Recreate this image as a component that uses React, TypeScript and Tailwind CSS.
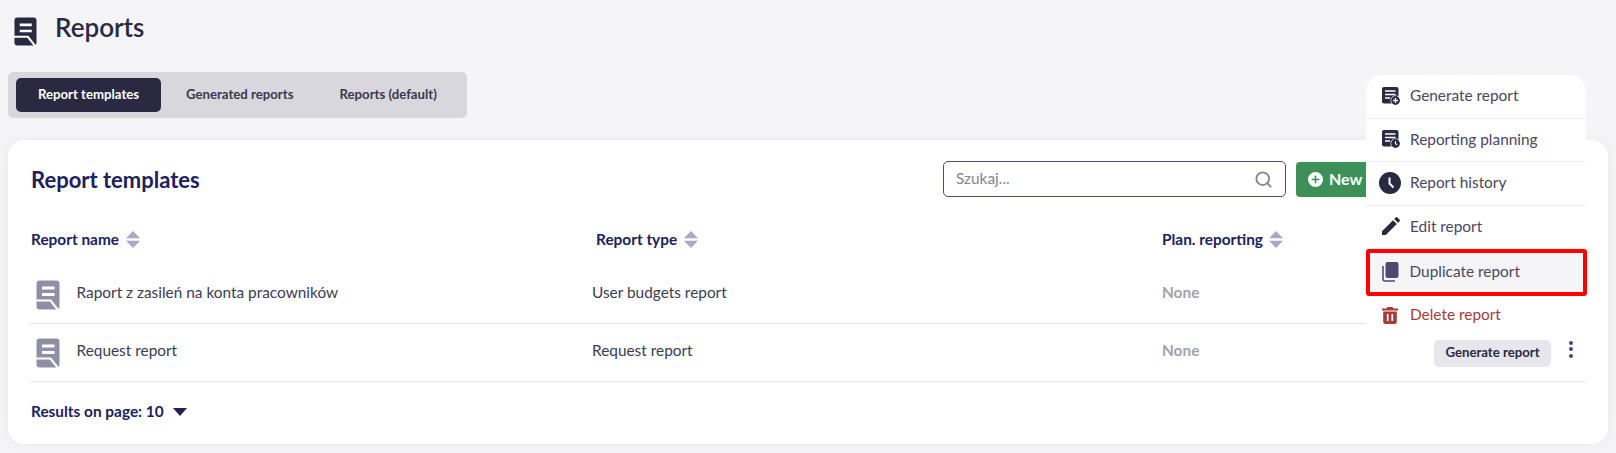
import React from 'react';
import { Search, Plus } from 'lucide-react';

const ReportIcon = ({ className }: { className: string }) => (
  <svg viewBox="0 0 24 30" className={className}>
    <rect x="0.5" y="0.5" width="23" height="29" rx="3" fill="currentColor" />
    <path d="M6 8h12.5M6 14.5h12.5" stroke="#fff" strokeWidth="2.8" fill="none" />
    <path d="M0 20.5h14.5l7.5 9.5" stroke="#fff" strokeWidth="2.2" fill="none" />
  </svg>
);

const SortIcon = () => (
  <svg viewBox="0 0 14 17" className="ml-[6.5px] h-[17px] w-[14px] text-[#a9a8c6]">
    <path d="M7 0l7 7.3H0zM0 9.7h14L7 17z" fill="currentColor" />
  </svg>
);

const DocIcon = ({ badge }: { badge: 'plus' | 'clock' }) => (
  <svg viewBox="0 0 18 18" className="h-[18px] w-[18px] text-[#2b2942]">
    <rect x="0" y="0" width="16.5" height="16.5" rx="2" fill="currentColor" />
    <path d="M3 4h10.5M3 7.5h10.5M3 11h5" stroke="#fff" strokeWidth="1.6" />
    <circle cx="13.5" cy="13.5" r="5" fill="#fff" />
    <circle cx="13.5" cy="13.5" r="4.4" fill="currentColor" />
    {badge === 'plus' ? (
      <path d="M13.5 11.1v4.8M11.1 13.5h4.8" stroke="#fff" strokeWidth="1.3" />
    ) : (
      <path d="M13.5 11.2v2.5l1.7 1.2" stroke="#fff" strokeWidth="1.1" fill="none" />
    )}
  </svg>
);

const ClockIcon = () => (
  <svg viewBox="0 0 22 22" className="-ml-[3px] h-[22px] w-[22px] text-[#2b2942]">
    <circle cx="11" cy="11" r="11" fill="currentColor" />
    <path d="M10.5 5.5v6l4 4" stroke="#fff" strokeWidth="2" fill="none" />
  </svg>
);

const PencilIcon = () => (
  <svg viewBox="0 0 18 18" className="h-[18px] w-[18px] text-[#2b2942]">
    <path
      d="M0 18v-3.8L11 3.2l3.8 3.8L3.8 18zM12.2 2l1.4-1.4a1.3 1.3 0 0 1 1.9 0l1.9 1.9a1.3 1.3 0 0 1 0 1.9L16 5.8z"
      fill="currentColor"
    />
  </svg>
);

const CopyIcon = () => (
  <svg viewBox="0 0 17 20" className="h-[20px] w-[17px] text-[#4d4b70]">
    <rect x="3.5" y="0" width="13" height="16" rx="2" fill="currentColor" />
    <path d="M1 4v13a2 2 0 0 0 2 2h10" stroke="currentColor" strokeWidth="1.6" fill="none" />
  </svg>
);

const TrashIcon = () => (
  <svg viewBox="0 0 16 17" className="h-[17px] w-[16px] text-[#a63a3a]">
    <path
      d="M0 1.5h4.5L5.5 0h5l1 1.5H16v2H0zM1.2 4.5h13.6V15a2 2 0 0 1-2 2H3.2a2 2 0 0 1-2-2z"
      fill="currentColor"
    />
    <path d="M5.7 7v7M10.3 7v7" stroke="#fff" strokeWidth="1.7" />
  </svg>
);

const menuItems = [
  { label: 'Generate report', icon: <DocIcon badge="plus" /> },
  { label: 'Reporting planning', icon: <DocIcon badge="clock" /> },
  { label: 'Report history', icon: <ClockIcon /> },
  { label: 'Edit report', icon: <PencilIcon /> },
];

const rows = [
  { name: 'Raport z zasileń na konta pracowników', type: 'User budgets report', showButton: false },
  { name: 'Request report', type: 'Request report', showButton: true },
];

const App = () => {
  return (
    <div className="relative h-[453px] w-[1616px] overflow-hidden bg-[#f5f5f8] font-['Lato',sans-serif] text-[15.4px]">
      {/* Page title */}
      <div className="flex h-[72px] items-start pl-[14px] pt-[17px]">
        <ReportIcon className="h-[29px] w-[23px] text-[#2b2942]" />
        <h1 className="ml-[18px] -mt-[2px] text-[26px] leading-[24px] font-semibold text-[#2b2942]">Reports</h1>
      </div>

      {/* Tabs */}
      <div className="ml-[8px] flex h-[46px] w-[459px] items-center rounded-[5px] bg-[#d8d7dd] pl-[8px] text-[13.2px] font-bold">
        <div className="flex h-[34px] w-[145px] items-center justify-center rounded-[5px] bg-[#2b2942] text-white">Report templates</div>
        <div className="ml-[25px] text-[#3a3850]">Generated reports</div>
        <div className="ml-[46px] text-[#3a3850]">Reports (default)</div>
      </div>

      {/* Card */}
      <div className="mx-[8px] mt-[22px] h-[303.5px] rounded-[16px] bg-white px-[22px] shadow-[0_0_12px_rgba(40,40,70,0.06)]">
        <div className="flex h-[78px] items-center">
          <h2 className="ml-px text-[22px] font-bold text-[#20205a]">Report templates</h2>
          <div className="ml-auto flex h-[36px] w-[343px] items-center justify-between rounded-[5px] border border-[#4d4b70] bg-white pl-[12px] pr-[12px]">
            <span className="text-[#85848f]">Szukaj...</span>
            <Search className="h-[19px] w-[19px] text-[#85848f]" strokeWidth={2.3} />
          </div>
          <div className="ml-[10px] flex h-[35px] w-[290px] items-center rounded-[4px] bg-[#3d9158] pl-[12px] text-[16px] font-bold text-white">
            <span className="flex h-[15px] w-[15px] items-center justify-center rounded-full bg-white">
              <Plus className="h-[11px] w-[11px] text-[#3d9158]" strokeWidth={3.5} />
            </span>
            <span className="ml-[6px]">New report</span>
          </div>
        </div>

        <div className="grid h-[48px] grid-cols-[565px_566px_1fr] items-center pb-[4px] pl-px font-bold text-[#20205a]">
          <div className="flex items-center">Report name<SortIcon /></div>
          <div className="flex items-center">Report type<SortIcon /></div>
          <div className="flex items-center">Plan. reporting<SortIcon /></div>
        </div>

        {rows.map((row) => (
          <div key={row.name} className="grid h-[58px] grid-cols-[562px_570px_1fr] items-center border-b border-[#e6e6ea] pb-[3.5px] text-[#3d3b55]">
            <div className="flex items-center pl-[6px]">
              <ReportIcon className="mt-[4.5px] h-[30px] w-[24px] text-[#918fa6]" />
              <span className="ml-[16.5px]">{row.name}</span>
            </div>
            <div>{row.type}</div>
            <div className="flex items-center justify-between">
              <span className="font-bold text-[#a3a2ad]">None</span>
              {row.showButton && (
                <div className="flex items-center">
                  <span className="mt-[4.5px] flex h-[27px] w-[117px] items-center justify-center rounded-[5px] bg-[#e7e6ec] text-[13.2px] font-bold text-[#2b2942]">Generate report</span>
                  <span className="mb-[3px] ml-[17.7px] mr-[13.3px] flex flex-col gap-[2.3px]">
                    <i className="h-[4px] w-[4px] rounded-full bg-[#3f4a80]" />
                    <i className="h-[4px] w-[4px] rounded-full bg-[#3f4a80]" />
                    <i className="h-[4px] w-[4px] rounded-full bg-[#3f4a80]" />
                  </span>
                </div>
              )}
            </div>
          </div>
        ))}

        <div className="flex h-[61px] items-center pb-[2px] pl-px font-bold text-[#20205a]">
          Results on page: 10
          <svg viewBox="0 0 14 8" className="ml-[9px] h-[8px] w-[14px]">
            <path d="M0 0h14L7 8z" fill="currentColor" />
          </svg>
        </div>
      </div>

      {/* Row actions menu */}
      <div className="absolute left-[1366px] top-[75px] w-[220px] rounded-t-[16px] bg-white text-[#4a4860]">
        {menuItems.map((item) => (
          <div key={item.label} className="flex h-[43.5px] items-center border-b border-[#efeff2] pb-[1px] pl-[16px]">
            <span className="flex w-[28px]">{item.icon}</span>
            {item.label}
          </div>
        ))}
        <div className="-mr-px flex h-[47px] items-center rounded-[3px] border-[4.5px] border-[#ff0000] bg-[#f5f5f8] pb-[2px] pl-[11.5px]">
          <span className="flex w-[28px]"><CopyIcon /></span>
          Duplicate report
        </div>
        <div className="flex h-[41px] items-center pb-[3px] pl-[16px] text-[#a63a3a]">
          <span className="flex w-[28px]"><TrashIcon /></span>
          Delete report
        </div>
      </div>
    </div>
  );
};

export default App;
